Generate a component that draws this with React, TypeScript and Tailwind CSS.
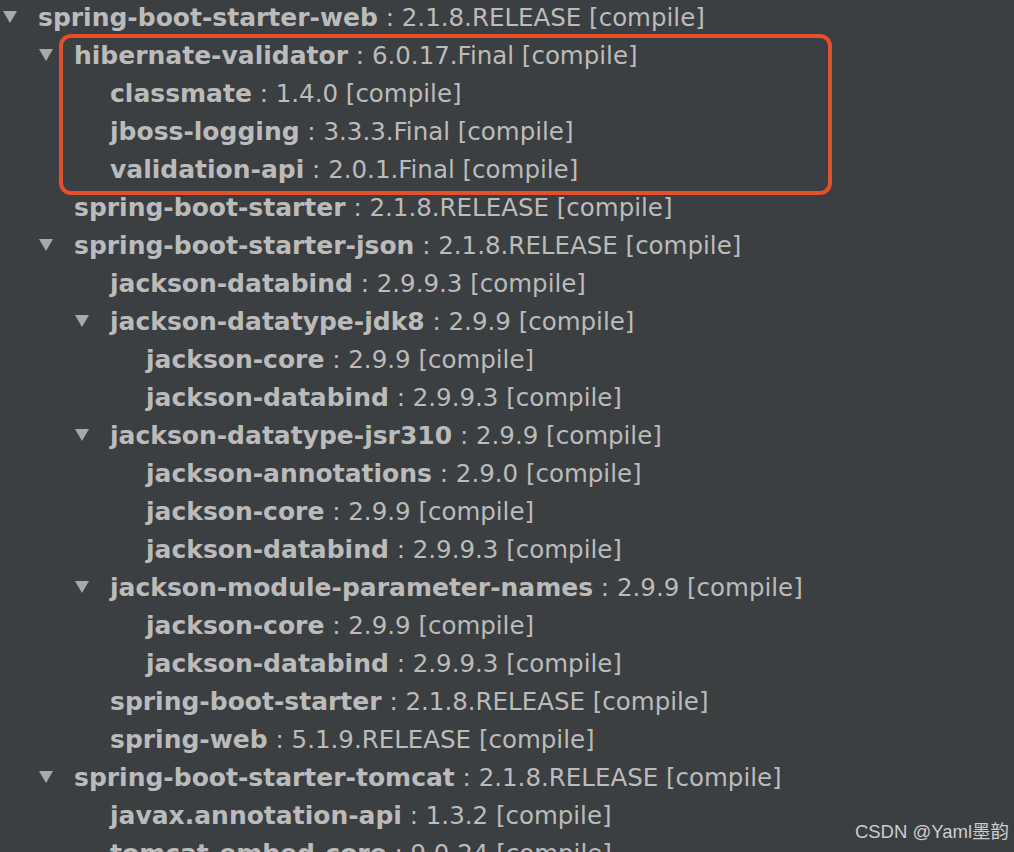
import React from "react";

type Row = {
  name: string;
  ver: string;
  level: number;
  open?: boolean;
};

const rows: Row[] = [
  { name: "spring-boot-starter-web", ver: "2.1.8.RELEASE", level: 0, open: true },
  { name: "hibernate-validator", ver: "6.0.17.Final", level: 1, open: true },
  { name: "classmate", ver: "1.4.0", level: 2 },
  { name: "jboss-logging", ver: "3.3.3.Final", level: 2 },
  { name: "validation-api", ver: "2.0.1.Final", level: 2 },
  { name: "spring-boot-starter", ver: "2.1.8.RELEASE", level: 1 },
  { name: "spring-boot-starter-json", ver: "2.1.8.RELEASE", level: 1, open: true },
  { name: "jackson-databind", ver: "2.9.9.3", level: 2 },
  { name: "jackson-datatype-jdk8", ver: "2.9.9", level: 2, open: true },
  { name: "jackson-core", ver: "2.9.9", level: 3 },
  { name: "jackson-databind", ver: "2.9.9.3", level: 3 },
  { name: "jackson-datatype-jsr310", ver: "2.9.9", level: 2, open: true },
  { name: "jackson-annotations", ver: "2.9.0", level: 3 },
  { name: "jackson-core", ver: "2.9.9", level: 3 },
  { name: "jackson-databind", ver: "2.9.9.3", level: 3 },
  { name: "jackson-module-parameter-names", ver: "2.9.9", level: 2, open: true },
  { name: "jackson-core", ver: "2.9.9", level: 3 },
  { name: "jackson-databind", ver: "2.9.9.3", level: 3 },
  { name: "spring-boot-starter", ver: "2.1.8.RELEASE", level: 2 },
  { name: "spring-web", ver: "5.1.9.RELEASE", level: 2 },
  { name: "spring-boot-starter-tomcat", ver: "2.1.8.RELEASE", level: 1, open: true },
  { name: "javax.annotation-api", ver: "1.3.2", level: 2 },
  { name: "tomcat-embed-core", ver: "9.0.24", level: 2 },
];

const pads = ["pl-[38px]", "pl-[74px]", "pl-[110px]", "pl-[146px]"];

const Arrow = () => (
  <svg width="14" height="12" viewBox="0 0 14 12" className="absolute left-[-35px] top-[12px]">
    <polygon points="0,0 14,0 7,12" fill="#a9a9a9" />
  </svg>
);

export default function App() {
  return (
    <div className="relative h-[852px] w-[1014px] overflow-hidden bg-[#3c3f41] font-['DejaVu_Sans',sans-serif] text-[#bbbbbb]">
      <div className="-mt-[1px] flex flex-col">
        {rows.map((r, i) => (
          <div key={i} className={`flex h-[38px] items-center whitespace-nowrap text-[25px] ${pads[r.level]}`}>
            <div className="relative flex items-center">
              {r.open && <Arrow />}
              <span className="font-bold">{r.name}</span>
              <span className="text-[24.5px]">&nbsp;: {r.ver} [compile]</span>
            </div>
          </div>
        ))}
      </div>
      {/* highlight box */}
      <div className="absolute left-[59px] top-[34px] h-[161px] w-[773px] rounded-[12px] border-[4px] border-[#e5502b]" />
      <div className="absolute bottom-[6px] right-[5px] font-['Liberation_Sans','Noto_Sans_CJK_SC',sans-serif] text-[18.5px] text-[#cccccc]">
        CSDN @Yaml墨韵
      </div>
    </div>
  );
}
